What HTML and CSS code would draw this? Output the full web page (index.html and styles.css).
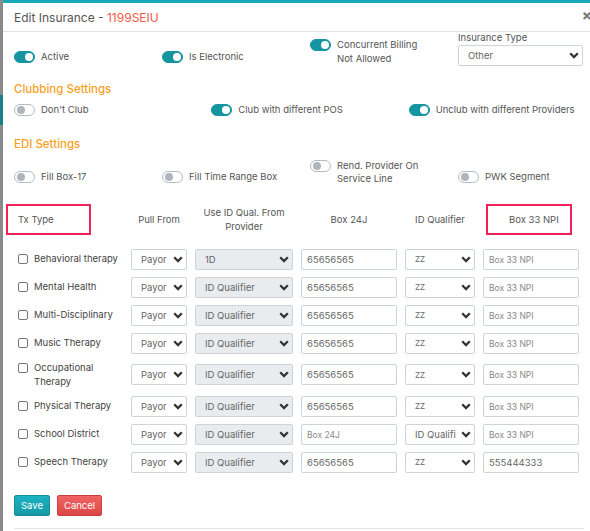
FILE: index.html
```html
<!DOCTYPE html>
<html lang="en">
<head>
  <meta charset="UTF-8" />
  <title>Edit Insurance</title>
  <link rel="stylesheet" href="styles.css">
</head>
<body>
  <div class="backdrop"></div>
  <div class="modal">
    <div class="modal-header">
      <h4 class="modal-title">Edit Insurance - <span class="ins-code">1199SEIU</span></h4>
      <span class="close">&times;</span>
    </div>

    <div class="modal-body">
      <div class="row four">
        <div class="switch-item one"><span class="switch on"></span><span>Active</span></div>
        <div class="switch-item one"><span class="switch on"></span><span>Is Electronic</span></div>
        <div class="switch-item"><span class="switch on"></span><span>Concurrent Billing<br>Not Allowed</span></div>
        <div class="field">
          <label>Insurance Type</label>
          <select class="select wide"><option>Other</option></select>
        </div>
      </div>

      <h5 class="section-title">Clubbing Settings</h5>
      <div class="row three">
        <div class="switch-item"><span class="switch"></span><span>Don't Club</span></div>
        <div class="switch-item"><span class="switch on"></span><span>Club with different POS</span></div>
        <div class="switch-item"><span class="switch on"></span><span>Unclub with different Providers</span></div>
      </div>

      <h5 class="section-title edi">EDI Settings</h5>
      <div class="row four tight">
        <div class="switch-item one"><span class="switch"></span><span>Fill Box-17</span></div>
        <div class="switch-item one"><span class="switch"></span><span>Fill Time Range Box</span></div>
        <div class="switch-item"><span class="switch"></span><span>Rend. Provider On<br>Service Line</span></div>
        <div class="switch-item one"><span class="switch"></span><span>PWK Segment</span></div>
      </div>

      <table class="tx-table">
        <colgroup>
          <col style="width:121px"><col style="width:64px"><col style="width:106px">
          <col style="width:104px"><col style="width:78px"><col style="width:104px">
        </colgroup>
        <thead>
          <tr>
            <th class="left"><span class="mark mark-tx">Tx Type</span></th>
            <th>Pull From</th>
            <th>Use ID Qual. From<br>Provider</th>
            <th>Box 24J</th>
            <th>ID Qualifier</th>
            <th><span class="mark mark-npi">Box 33 NPI</span></th>
          </tr>
        </thead>
        <tbody id="rows"></tbody>
      </table>

      <div class="actions">
        <button class="btn btn-save">Save</button>
        <button class="btn btn-cancel">Cancel</button>
      </div>
      <hr class="footer-line">
    </div>
  </div>

  <script>
    var rows = [
      { name: 'Behavioral therapy', idq: '1D', box24: '65656565', q: 'ZZ', npi: '' },
      { name: 'Mental Health', idq: '', box24: '65656565', q: 'ZZ', npi: '' },
      { name: 'Multi-Disciplinary', idq: '', box24: '65656565', q: 'ZZ', npi: '' },
      { name: 'Music Therapy', idq: '', box24: '65656565', q: 'ZZ', npi: '' },
      { name: 'Occupational Therapy', idq: '', box24: '65656565', q: 'ZZ', npi: '' },
      { name: 'Physical Therapy', idq: '', box24: '65656565', q: 'ZZ', npi: '' },
      { name: 'School District', idq: '', box24: '', q: '', npi: '' },
      { name: 'Speech Therapy', idq: '', box24: '65656565', q: 'ZZ', npi: '555444333' }
    ];

    var body = document.getElementById('rows');
    rows.forEach(function (r) {
      var tr = document.createElement('tr');
      tr.innerHTML =
        '<td class="left"><label class="check"><input type="checkbox"><span>' + r.name + '</span></label></td>' +
        '<td><select class="select"><option>Payor</option></select></td>' +
        '<td><select class="select" disabled><option>' + (r.idq || 'ID Qualifier') + '</option></select></td>' +
        '<td><input class="input" placeholder="Box 24J" value="' + r.box24 + '"></td>' +
        '<td><select class="select' + (r.q ? ' small' : '') + '"><option>' + (r.q || 'ID Qualifi') + '</option></select></td>' +
        '<td><input class="input" placeholder="Box 33 NPI" value="' + r.npi + '"></td>';
      body.appendChild(tr);
    });
  </script>
</body>
</html>
```

FILE: styles.css
```css
html, body {
  margin: 0;
  padding: 0;
  overflow: hidden;
}

body {
  font-family: Inter, "Open Sans", sans-serif;
  color: #555;
  background-color: #fff;
  display: flex;
  width: 640px;
}

.backdrop {
  width: 3px;
  height: 531px;
  background: linear-gradient(#8a8a8a 0, #8a8a8a 95px, #1b7f86 95px, #1b7f86 125px, #8a8a8a 125px);
  flex: none;
}

.modal {
  width: 614px;
  flex: none;
  border-top: 3px solid #17a9b8;
  background-color: #fff;
}

.modal-header {
  display: flex;
  justify-content: space-between;
  align-items: center;
  height: 28px;
  padding: 0 25px 0 11px;
  border-bottom: 1px solid #e3e3e3;
}

.modal-title {
  margin: 0;
  font-size: 12px;
  font-weight: 400;
  color: #555;
}

.ins-code {
  color: #f0594a;
}

.close {
  font-size: 15px;
  font-weight: 700;
  color: #777;
  margin-top: -4px;
}

.modal-body {
  padding: 0 11px;
}

.row {
  display: grid;
  align-items: end;
}

.four {
  grid-template-columns: repeat(4, 148px);
}

.three {
  grid-template-columns: repeat(3, 1fr);
  align-items: center;
}

.switch-item {
  display: flex;
  align-items: flex-start;
  gap: 6px;
  font-size: 9.5px;
  line-height: 14px;
}

.row.four .switch-item.one {
  margin-bottom: 2px;
}

.row.tight .switch-item {
  line-height: 13px;
}

.switch {
  position: relative;
  flex: none;
  width: 19px;
  height: 10px;
  margin-top: 1px;
  border: 1px solid #b5bcc3;
  border-radius: 7px;
  background-color: #fff;
}

.switch::after {
  content: "";
  position: absolute;
  top: 1px;
  left: 2px;
  width: 8px;
  height: 8px;
  border-radius: 50%;
  background-color: #aeb5bc;
}

.switch.on {
  background-color: #14959f;
  border-color: #14959f;
}

.switch.on::after {
  left: auto;
  right: 1px;
  background-color: #fff;
}

.field label {
  display: block;
  font-size: 9.5px;
  line-height: 12px;
}

.section-title {
  margin: 16px 0 7px;
  font-size: 11.5px;
  font-weight: 500;
  line-height: 14px;
  color: #f7a01f;
}

.section-title.edi {
  margin-top: 20px;
  margin-bottom: 8px;
}

.select {
  -webkit-appearance: none;
  appearance: none;
  width: 100%;
  height: 21px;
  padding: 0 14px 0 9px;
  border: 1px solid #cfd4d9;
  border-radius: 2px;
  background-color: #fff;
  background-image: url("data:image/svg+xml,%3Csvg xmlns='http://www.w3.org/2000/svg' width='10' height='7' viewBox='0 0 10 7'%3E%3Cpath d='M1.2 1.3 5 5.1 8.8 1.3' fill='none' stroke='%23333' stroke-width='2.2'/%3E%3C/svg%3E");
  background-repeat: no-repeat;
  background-position: right 3px center;
  font-family: inherit;
  font-size: 9.5px;
  color: #666;
}

.select:disabled {
  background-color: #e9ecef;
  opacity: 1;
  color: #666;
}

.select.small {
  font-size: 8px;
}

.select.wide {
  display: block;
  width: 125px;
  margin-top: 1px;
}

.tx-table {
  table-layout: fixed;
  border-collapse: collapse;
  margin: 19px 0 0 -8px;
  width: 577px;
}

.tx-table th {
  height: 31px;
  padding: 0 4px 10px;
  font-size: 9.5px;
  font-weight: 400;
  line-height: 14px;
  text-align: center;
  vertical-align: middle;
}

.tx-table th.left {
  text-align: left;
}

.mark {
  display: block;
  box-sizing: border-box;
  height: 31px;
  line-height: 27px;
  border: 2px solid #f3205a;
}

.mark-tx {
  width: 85px;
  padding-left: 10px;
  margin-left: -4px;
}

.mark-npi {
  width: 86px;
  padding-left: 21px;
  text-align: left;
  margin-left: 3px;
}

.tx-table td {
  padding: 3.5px 4px;
  height: 21px;
  font-size: 9.5px;
  vertical-align: middle;
}

.tx-table td.left {
  padding-left: 12px;
}

.check {
  display: flex;
  align-items: flex-start;
  gap: 6px;
  line-height: 14px;
  color: #444;
}

.check input {
  -webkit-appearance: none;
  appearance: none;
  flex: none;
  width: 10px;
  height: 10px;
  margin: 2px 0 0;
  border: 1px solid #777;
  border-radius: 2px;
  background: #fff;
}

.input {
  display: block;
  box-sizing: border-box;
  width: 100%;
  height: 21px;
  padding: 0 5px;
  border: 1px solid #cfd4d9;
  border-radius: 2px;
  font-family: inherit;
  font-size: 9.5px;
  color: #666;
}

.input::placeholder {
  color: #888;
  font-size: 8.5px;
}

.tx-table .select {
  display: block;
}

.actions {
  display: flex;
  gap: 7px;
  margin-top: 19px;
}

.btn {
  height: 21px;
  padding: 0 6px;
  border: 1px solid transparent;
  border-radius: 2px;
  font-family: inherit;
  font-size: 9.5px;
  color: #fff;
  cursor: pointer;
}

.btn-save {
  background: linear-gradient(#1bb3c2, #1599a6);
  border-color: #138e9b;
}

.btn-cancel {
  background: linear-gradient(#f06464, #dc4646);
  border-color: #c94040;
}

.footer-line {
  width: 570px;
  margin: 12px 0 0;
  border: 0;
  border-top: 1px solid #e3e3e3;
}
```
